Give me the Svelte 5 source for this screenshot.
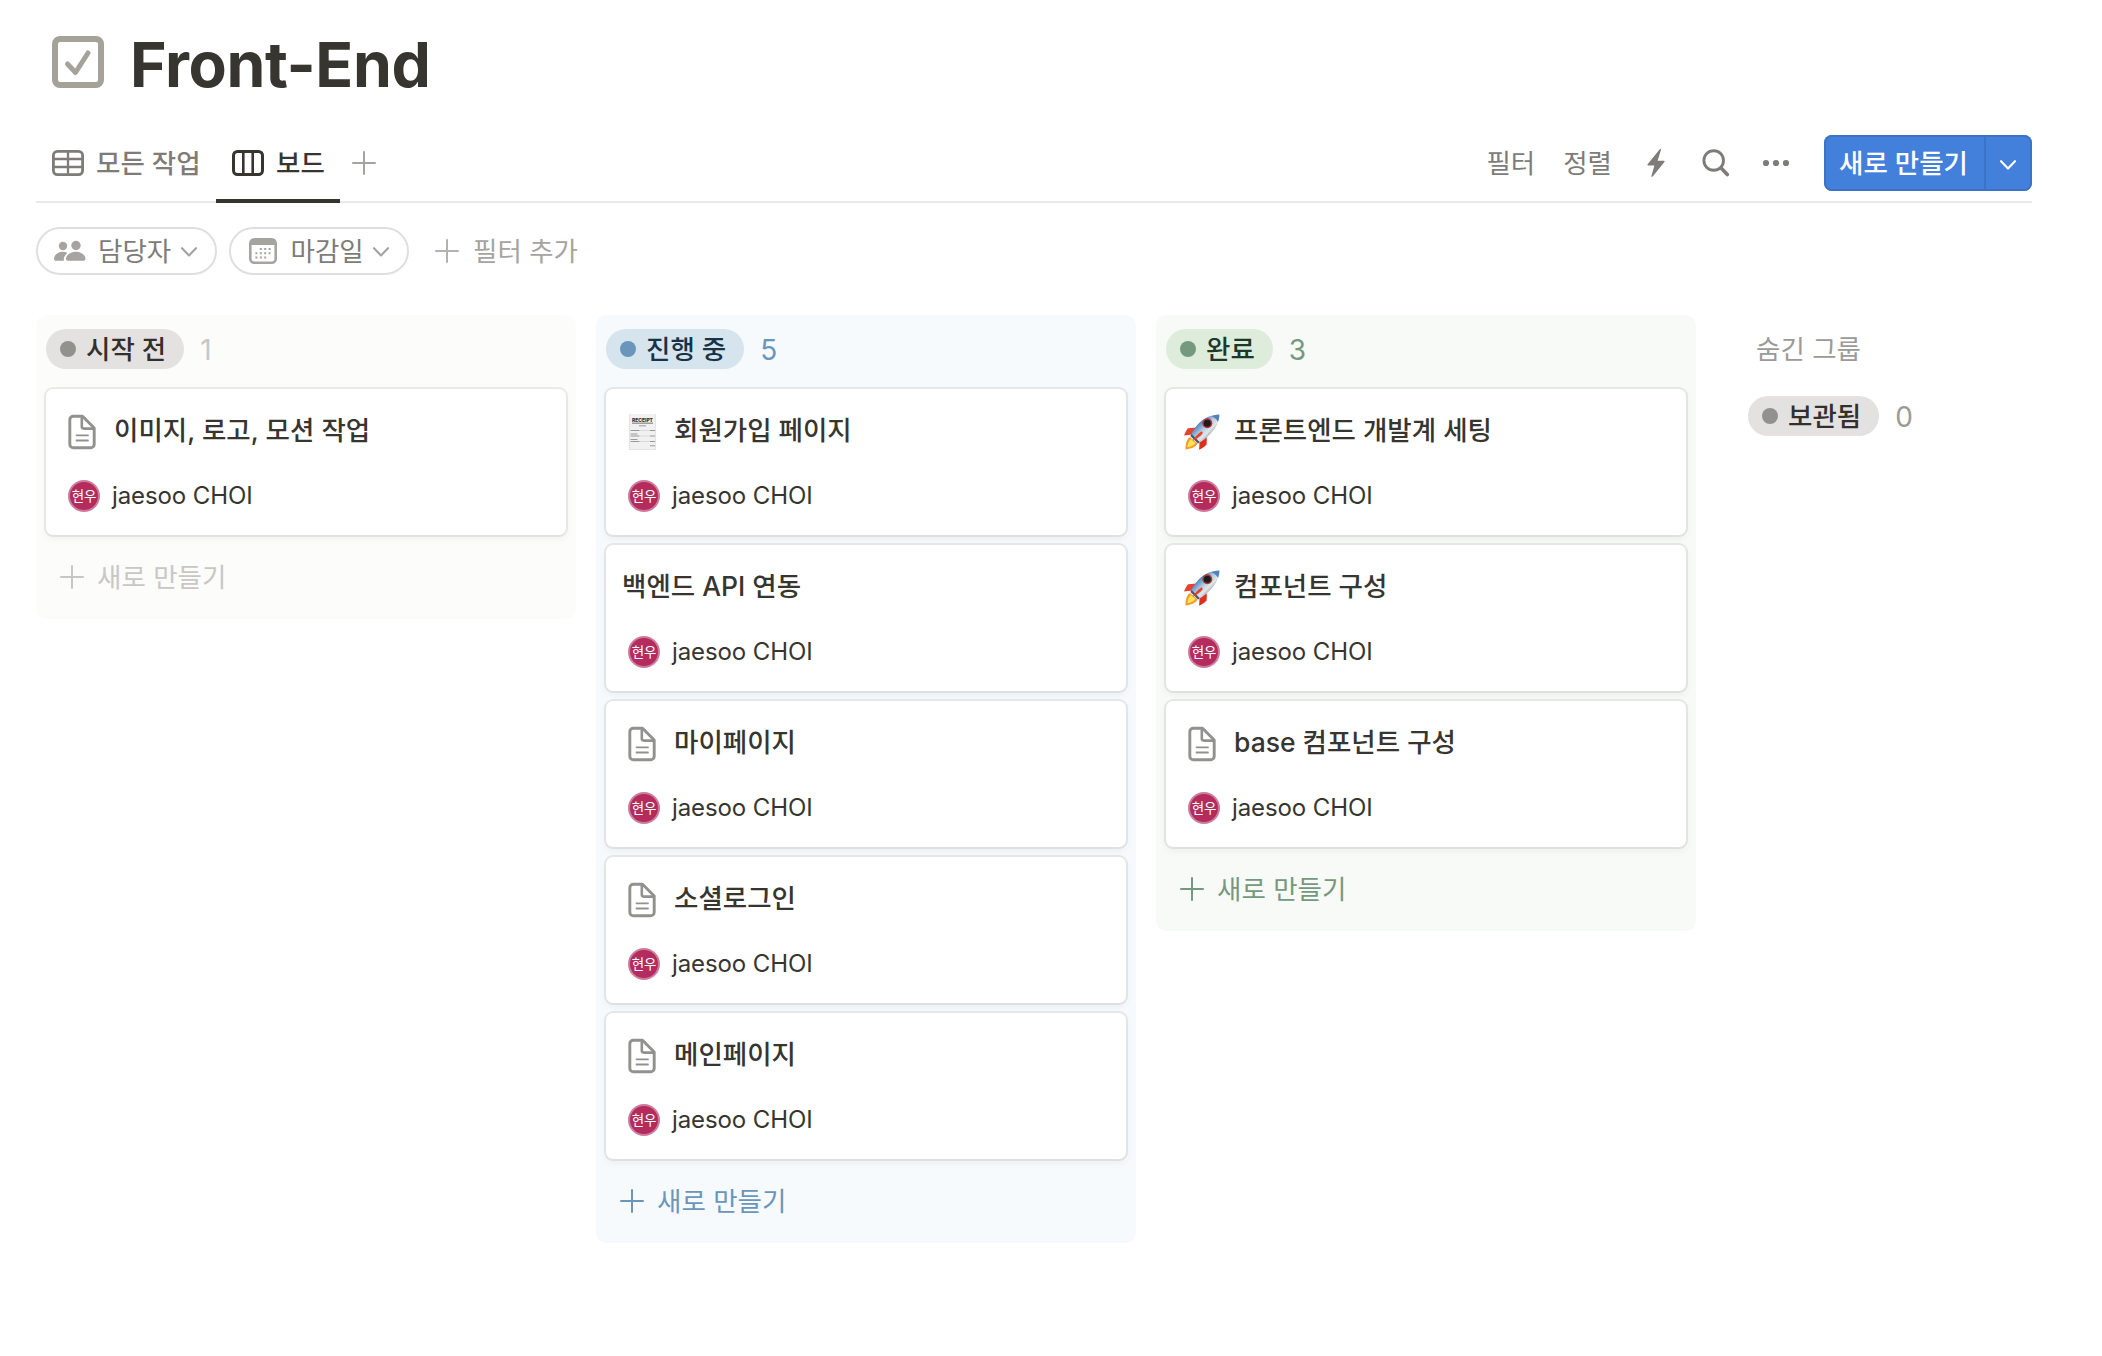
<script lang="ts">
  type Icon = "doc" | "receipt" | "rocket" | null;

  interface Card {
    title: string;
    icon: Icon;
  }

  interface Column {
    name: string;
    color: string;
    cards: Card[];
  }

  const assignee = { name: "jaesoo CHOI", initials: "현우" };

  const columns: Column[] = [
    {
      name: "시작 전",
      color: "gray",
      cards: [{ title: "이미지, 로고, 모션 작업", icon: "doc" }],
    },
    {
      name: "진행 중",
      color: "blue",
      cards: [
        { title: "회원가입 페이지", icon: "receipt" },
        { title: "백엔드 API 연동", icon: null },
        { title: "마이페이지", icon: "doc" },
        { title: "소셜로그인", icon: "doc" },
        { title: "메인페이지", icon: "doc" },
      ],
    },
    {
      name: "완료",
      color: "green",
      cards: [
        { title: "프론트엔드 개발계 세팅", icon: "rocket" },
        { title: "컴포넌트 구성", icon: "rocket" },
        { title: "base 컴포넌트 구성", icon: "doc" },
      ],
    },
  ];
</script>

{#snippet plus()}
  <svg class="plus" width="24" height="24" viewBox="0 0 24 24" fill="none" stroke="currentColor" stroke-width="2" stroke-linecap="round">
    <path d="M12 1v22M1 12h22" />
  </svg>
{/snippet}

{#snippet chevron()}
  <svg class="chevron" width="18" height="12" viewBox="0 0 18 12" fill="none" stroke="currentColor" stroke-width="2.2" stroke-linecap="round" stroke-linejoin="round">
    <path d="M2 2.2l7 7.2 7-7.2" />
  </svg>
{/snippet}

{#snippet cardIcon(icon: Icon)}
  {#if icon === "doc"}
    <svg width="36" height="36" viewBox="0 0 36 36" fill="none" stroke="#91918e" stroke-linejoin="round" stroke-linecap="round">
      <path stroke-width="2.9" d="M9.3 2.2h9.2L30.2 14v16.2a3.5 3.5 0 0 1-3.5 3.5H9.3a3.5 3.5 0 0 1-3.5-3.5V5.700a3.5 3.5 0 0 1 3.5-3.500z" />
      <path stroke-width="2.6" d="M17.8 3v9.6a2 2 0 0 0 2 2h9.7" />
      <path stroke-width="1.8" d="M12.5 21.3h11.5M12.5 26.5h11.5" />
    </svg>
  {:else if icon === "receipt"}
    <svg width="36" height="36" viewBox="0 0 36 36">
      <rect x="5" y="0" width="27" height="36" fill="#f1f1f1" />
      <path d="M5.4 0v35.6h26.2V0" fill="none" stroke="#dedede" stroke-width=".8" />
      <text class="receipt-title" x="18.5" y="7.500" text-anchor="middle" textLength="21">RECEIPT</text>
      <path stroke="#8a8a8a" stroke-width="1.200" d="M8 9.200h21" />
      <path stroke="#aaa" stroke-width="1.200" d="M15 11.800h7" />
      <path stroke="#999" stroke-width="1.100" d="M6.500 16.500h9M26 16.500h5M6.500 20h7M6.500 22h9M26 22h5M6.500 25.500h7M6.500 27.500h9M26 27.500h5M26 31.800h5" />
      <path stroke="#d4d4d4" stroke-width=".8" d="M16 16.500h10M16 22h10M16 27.500h10" />
    </svg>
  {:else if icon === "rocket"}
    <svg width="36" height="36" viewBox="0 0 36 36">
      <defs>
        <linearGradient id="hull" x1="0" y1="0" x2="1" y2="1">
          <stop offset=".3" stop-color="#4f86c4" />
          <stop offset=".48" stop-color="#b9cde0" />
          <stop offset=".6" stop-color="#e3e6e8" />
          <stop offset=".75" stop-color="#7e8b98" />
        </linearGradient>
      </defs>
      <path fill="#e8432a" d="M13 13.500l-9 .8c-1.500 2-3 4.500-4 7.200l8.500-1z" />
      <path fill="#dd2f1e" d="M22.500 22.500c.4 3 .3 5.500 0 8-2 2.400-4.600 4-7.400 5.200l.5-8.400z" />
      <path fill="#f79a28" d="M6 23c-3 1.500-4.800 7-4.500 12.500C6.500 35 12 33 13.500 29.500z" />
      <path fill="#fde35a" d="M7 25c-2 1.500-3.400 5-3.700 8.300 3.500-.6 6.900-2 8.200-4.300z" />
      <path fill="url(#hull)" d="M6.500 22C11 11.500 20 1 35.300.5 36 11 25 23.500 14 29.500z" />
      <path fill="#4f83bf" d="M27.500 2.200c2.500-.9 5.300-1.600 7.800-1.700.2 2.500-.4 4.900-1.300 7.200-1.500-2.500-3.500-4.500-6.500-5.500z" />
      <path fill="#46576b" d="M6.500 22l7.500 7.500 1.800-1.300-8.200-8.300z" />
      <circle cx="23.300" cy="9.300" r="5" fill="#b5372f" />
      <circle cx="23.300" cy="9.300" r="3.500" fill="#191c24" />
      <path fill="#e5402a" d="M17.600 17.200c-3.500 2.300-6.800 5.800-9 9.600 3.700-1.500 7.800-4.400 10.300-7.800z" />
    </svg>
  {/if}
{/snippet}

<main class="page">
  <header class="title">
    <svg width="52" height="52" viewBox="0 0 52 52" fill="none" stroke="#a5a299" stroke-linecap="round" stroke-linejoin="round">
      <rect x="3" y="3" width="46" height="46" rx="5" stroke-width="6" />
      <path stroke-width="5" d="M15.500 28l8 8.500 12.500-19.500" />
    </svg>
    <h1>Front-End</h1>
  </header>

  <nav class="toolbar">
    <div class="tabs">
      <div class="tab">
        <svg width="32" height="26" viewBox="0 0 32 26" fill="none" stroke="currentColor">
          <rect x="1.400" y="1.400" width="29.200" height="23.200" rx="4" stroke-width="2.800" />
          <path stroke-width="2.300" d="M2 9h28M2 17h28M16 2v22" />
        </svg>
        <span>모든 작업</span>
      </div>
      <div class="tab active">
        <svg width="32" height="26" viewBox="0 0 32 26" fill="none" stroke="currentColor">
          <rect x="1.500" y="1.500" width="29" height="23" rx="4" stroke-width="3" />
          <path stroke-width="2.600" d="M11.300 2v22M20.700 2v22" />
        </svg>
        <span>보드</span>
      </div>
      <div class="add-view">{@render plus()}</div>
    </div>
    <div class="actions">
      <span class="sort">필터</span>
      <span class="sort">정렬</span>
      <svg class="bolt" width="18" height="30" viewBox="0 0 18 30" fill="currentColor">
        <path d="M12.800 1.300L.6 16.300c-.4.600-.1 1.200.5 1.200h6.300L4.500 27.800c-.3 1 .6 1.300 1.200.6L17.400 14c.4-.6.1-1.200-.5-1.200h-6.300l3.300-10.800c.3-1-.5-1.400-1.100-.7z" />
      </svg>
      <svg class="search" width="28" height="28" viewBox="0 0 28 28" fill="none" stroke="currentColor" stroke-linecap="round">
        <circle cx="11.700" cy="11.500" r="9.800" stroke-width="2.900" />
        <path stroke-width="3.600" d="M19.300 19.300l6 6.200" />
      </svg>
      <svg class="dots" width="28" height="28" viewBox="0 0 28 28" fill="currentColor">
        <circle cx="4" cy="14" r="3.100" /><circle cx="14" cy="14" r="3.100" /><circle cx="24" cy="14" r="3.100" />
      </svg>
      <div class="create">
        <span>새로 만들기</span>
        <div class="create-more">{@render chevron()}</div>
      </div>
    </div>
  </nav>

  <div class="filters">
    <div class="filter">
      <svg width="32" height="22" viewBox="0 0 32 22" fill="currentColor">
        <circle cx="9" cy="6" r="4.200" />
        <circle cx="22" cy="5.500" r="4.700" />
        <path d="M0 19c0-4 4-7.200 8.500-7.200 1.800 0 3.500.400 4.900 1.200-2.100 1.700-3.600 4-3.600 6.300 0 .6.100 1 .3 1.400H1.500C.5 20.700 0 20 0 19zM12 19c0-4 4.500-7.200 9.800-7.200S31.500 15 31.500 19c0 1-.7 1.700-1.700 1.700H13.700C12.700 20.700 12 20 12 19z" />
      </svg>
      <span>담당자</span>
      {@render chevron()}
    </div>
    <div class="filter date">
      <svg width="28" height="26" viewBox="0 0 28 26" fill="none">
        <rect x="1.300" y="1.300" width="25.400" height="23.400" rx="4" stroke="currentColor" stroke-width="2.600" />
        <path fill="currentColor" d="M1 6a5 5 0 0 1 5-5h16a5 5 0 0 1 5 5v1H1z" />
        <path stroke="currentColor" stroke-width="2" stroke-dasharray="2 2.400" d="M10.800 11h11M6.400 15.200h15.400M6.400 19.400h11" />
      </svg>
      <span>마감일</span>
      {@render chevron()}
    </div>
    <div class="add-filter">
      {@render plus()}
      <span>필터 추가</span>
    </div>
  </div>

  <section class="board">
    {#each columns as column}
      <div class="column {column.color}">
        <div class="column-head">
          <div class="status {column.color}"><i></i>{column.name}</div>
          <span class="count">{column.cards.length}</span>
        </div>
        <div class="cards">
          {#each column.cards as card}
            <article class="card">
              <div class="card-title">
                {#if card.icon}
                  <div class="card-icon">{@render cardIcon(card.icon)}</div>
                {/if}
                <span>{card.title}</span>
              </div>
              <div class="person">
                <div class="avatar">{assignee.initials}</div>
                <span>{assignee.name}</span>
              </div>
            </article>
          {/each}
        </div>
        <div class="new-card">
          {@render plus()}
          <span>새로 만들기</span>
        </div>
      </div>
    {/each}

    <aside class="hidden-groups">
      <div class="hidden-title">숨긴 그룹</div>
      <div class="hidden-row">
        <div class="status gray"><i></i>보관됨</div>
        <span class="count">0</span>
      </div>
    </aside>
  </section>
</main>

<style>
  :global(body) {
    background: #fff;
  }

  .page {
    box-sizing: border-box;
    width: 2102px;
    height: 1356px;
    padding: 30px 70px 0 36px;
    font-family: Inter, "Noto Sans CJK KR", sans-serif;
    font-size: 26.5px;
    line-height: 40px;
    color: #37352f;
    white-space: nowrap;
    overflow: hidden;
  }

  svg {
    display: block;
    flex-shrink: 0;
  }

  .title {
    display: flex;
    align-items: center;
    gap: 26px;
    height: 64px;
    padding-left: 16px;
  }

  h1 {
    margin: 0;
    padding-top: 3px;
    font-size: 62.5px;
    line-height: 64px;
    font-weight: 700;
    letter-spacing: -0.4px;
  }

  .toolbar {
    display: flex;
    justify-content: space-between;
    box-sizing: border-box;
    height: 79px;
    margin-top: 30px;
    border-bottom: 2px solid #e9e9e7;
  }

  .tabs {
    display: flex;
    height: 79px;
  }

  .tab {
    display: flex;
    align-items: center;
    gap: 12px;
    box-sizing: border-box;
    height: 79px;
    padding: 2px 15.5px 0 16px;
    border-bottom: 4px solid transparent;
    color: #7d7c78;
    font-weight: 500;
  }

  .tab.active {
    color: #37352f;
    border-color: #37352f;
  }

  .add-view {
    padding: 27px 0 0 12px;
    color: #a5a4a0;
  }

  .actions {
    display: flex;
    align-items: center;
    height: 78px;
    color: #7d7c78;
  }

  .sort {
    margin-right: 28px;
  }

  .bolt {
    margin: 0 37px 0 7px;
  }

  .search {
    margin-right: 32px;
  }

  .dots {
    margin-right: 34px;
  }

  .create {
    display: flex;
    align-items: center;
    box-sizing: border-box;
    width: 208px;
    height: 56px;
    padding-left: 15px;
    border-radius: 8px;
    background: #4280dc;
    box-shadow: inset 0 0 0 2px #3b74c6;
    color: #fff;
    font-weight: 500;
  }

  .create-more {
    display: flex;
    align-items: center;
    justify-content: center;
    box-sizing: border-box;
    width: 48px;
    height: 56px;
    margin-left: auto;
    padding-right: 2px;
    border-left: 2px solid #3b74c6;
  }

  .create-more .chevron {
    margin-top: 3px;
  }

  .filters {
    display: flex;
    align-items: center;
    margin-top: 24px;
  }

  .filter {
    display: flex;
    align-items: center;
    box-sizing: border-box;
    width: 181px;
    height: 48px;
    margin-right: 12px;
    padding: 0 17px 0 16px;
    border: 2px solid #dfdfdd;
    border-radius: 24px;
    color: #a5a4a0;
  }

  .filter span {
    margin-left: 12px;
    color: #7d7c78;
  }

  .filter .chevron {
    margin: 2px 0 0 auto;
  }

  .filter.date {
    width: 180px;
    padding-left: 18px;
  }

  .filter.date span {
    margin-left: 13.5px;
  }

  .add-filter {
    display: flex;
    align-items: center;
    gap: 14px;
    margin-left: 14px;
    color: #a5a4a0;
  }

  .add-filter .plus {
    color: #b3b2af;
  }

  .board {
    display: flex;
    align-items: flex-start;
    gap: 20px;
    margin-top: 40px;
  }

  .column {
    box-sizing: border-box;
    width: 540px;
    padding: 14px 10px 0;
    border-radius: 10px;
  }

  .column.gray {
    background: #fcfcfa;
    color: #c8c7c4;
  }

  .column.blue {
    background: #f6fafd;
    color: #6a96bb;
  }

  .column.green {
    background: #f8faf7;
    color: #75997f;
  }

  .column-head,
  .hidden-row {
    display: flex;
    align-items: center;
    gap: 16px;
    height: 40px;
  }

  .count {
    padding-top: 1px;
    font-size: 28px;
  }

  .status {
    display: flex;
    align-items: center;
    gap: 10px;
    height: 40px;
    padding: 0 18px 0 14px;
    border-radius: 20px;
    font-weight: 500;
  }

  .status i {
    width: 16px;
    height: 16px;
    border-radius: 50%;
  }

  .status.gray {
    background: #e3e2e0;
    color: #32302c;
  }

  .status.gray i {
    background: #91918e;
  }

  .status.blue {
    background: #d6e4ee;
    color: #183347;
  }

  .status.blue i {
    background: #6a96bb;
  }

  .status.green {
    background: #deecdc;
    color: #1c3829;
  }

  .status.green i {
    background: #75997f;
  }

  .cards {
    display: grid;
    gap: 10px;
    margin-top: 20px;
  }

  .card {
    box-sizing: border-box;
    height: 146px;
    padding: 20px 16px 0;
    border-radius: 7px;
    background: #fff;
    box-shadow: 0 0 0 2px rgba(15, 15, 15, 0.07), 0 4px 8px rgba(15, 15, 15, 0.05);
    color: #37352f;
  }

  .card-title {
    display: flex;
    align-items: center;
    height: 42px;
    font-weight: 500;
  }

  .card-icon {
    width: 36px;
    height: 36px;
    margin: 3px 14px 0 2px;
  }

  .receipt-title {
    font-size: 5px;
    font-weight: 800;
    fill: #333;
  }

  .person {
    display: flex;
    align-items: center;
    gap: 12px;
    margin-top: 24px;
    padding-left: 6px;
    font-size: 24px;
    letter-spacing: -0.1px;
  }

  .person span {
    padding-top: 1px;
  }

  .avatar {
    display: flex;
    align-items: center;
    justify-content: center;
    box-sizing: border-box;
    width: 32px;
    height: 32px;
    border: 2px solid #cf7b9b;
    border-radius: 50%;
    background: #b42c5d;
    color: #fff;
    font-size: 13.5px;
  }

  .new-card {
    display: flex;
    align-items: center;
    gap: 13px;
    height: 84px;
    padding-left: 14px;
  }

  .hidden-groups {
    padding: 14px 0 0 32px;
    color: #9b9a97;
  }

  .hidden-title {
    padding-left: 8px;
  }

  .hidden-row {
    margin-top: 27px;
  }
</style>
